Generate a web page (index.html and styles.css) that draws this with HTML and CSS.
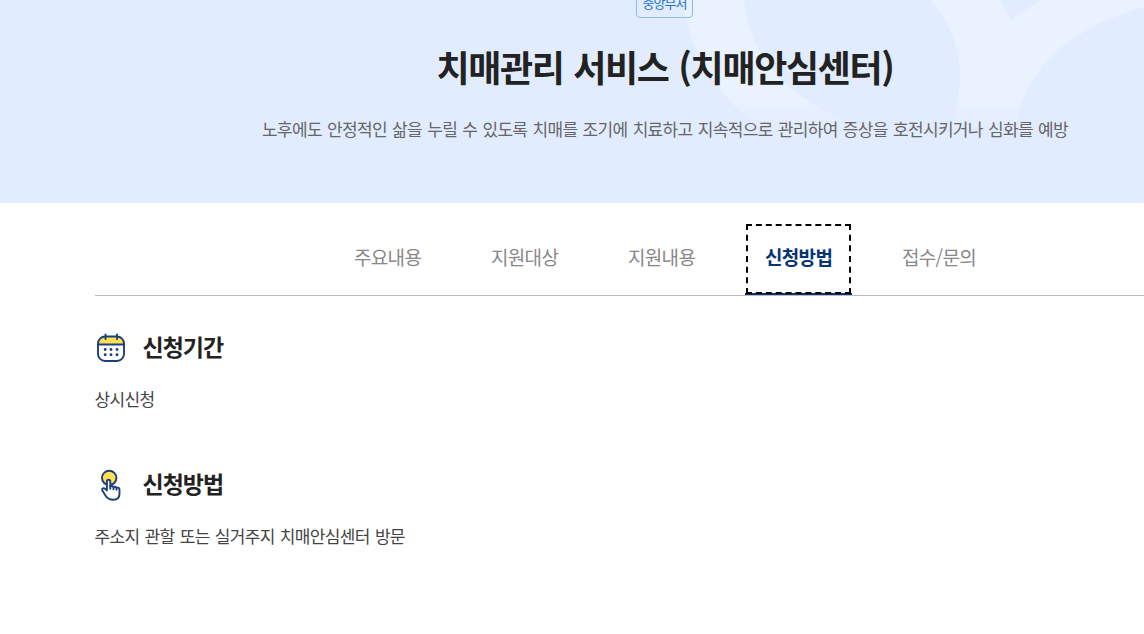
FILE: index.html
```html
<!DOCTYPE html>
<html lang="ko">
<head>
  <meta charset="UTF-8">
  <meta name="viewport" content="width=device-width, initial-scale=1.0">
  <title>치매관리 서비스 (치매안심센터)</title>
  <link rel="stylesheet" href="styles.css">
</head>
<body>
  <div class="page">

    <!-- 상단 서비스 소개 -->
    <header class="visual">
      <svg class="visual-bg" width="1330" height="203" viewBox="0 0 1330 203" aria-hidden="true">
        <defs>
          <linearGradient id="fade" gradientUnits="userSpaceOnUse" x1="0" y1="102" x2="0" y2="128">
            <stop offset="0" stop-color="#eaf1ff"/>
            <stop offset="1" stop-color="#e1edff"/>
          </linearGradient>
        </defs>
        <path fill="url(#fade)" d="M682 0Q694 78 760 128H862Q751 86 744 0Z"/>
        <path fill="url(#fade)" d="M930 0Q960 34 960 75Q960 104 951 128H1015Q1030 39 1144 7V0H1041Q1024 9 1011 21Q1006 9 999 0Z"/>
      </svg>
      <span class="badge">중앙부처</span>
      <h1 class="title">치매관리 서비스 (치매안심센터)</h1>
      <p class="summary">노후에도 안정적인 삶을 누릴 수 있도록 치매를 조기에 치료하고 지속적으로 관리하여 증상을 호전시키거나 심화를 예방</p>
    </header>

    <main class="container">
      <!-- 탭 메뉴 -->
      <nav class="tabs">
        <a class="tab" href="#">주요내용</a>
        <a class="tab" href="#">지원대상</a>
        <a class="tab" href="#">지원내용</a>
        <a class="tab active" href="#">신청방법</a>
        <a class="tab" href="#">접수/문의</a>
      </nav>

      <section class="info">
        <h2 class="info-title">
          <svg class="icon" width="32" height="32" viewBox="0 0 32 32" fill="none" stroke="#1b4079" stroke-width="1.900" stroke-linecap="round">
            <path d="M3 12.500V11Q3 4.500 9.500 4.500H22.500Q29 4.500 29 11V12.500Z" fill="#ffdf55" stroke="none"/>
            <rect x="3" y="4.500" width="26" height="24.500" rx="7"/>
            <path d="M3 12.500H29M10.500 2.500V7M22 2.500V7"/>
            <path d="M10.200 17.500h.01M16 17.500h.01M22 17.500h.01M10.200 22.800h.01M16 22.800h.01M22 22.800h.01" stroke-width="2.900"/>
          </svg>
          <span>신청기간</span>
        </h2>
        <p class="info-text">상시신청</p>
      </section>

      <section class="info">
        <h2 class="info-title">
          <svg class="icon" width="32" height="32" viewBox="0 0 32 32" fill="none" stroke="#1b4079" stroke-width="1.900" stroke-linecap="round" stroke-linejoin="round">
            <circle cx="14.200" cy="8.900" r="7.200" fill="#ffdf55"/>
            <path fill="#fff" d="M11.900 21.500V12.400a1.700 1.700 0 0 1 3.400 0V17.500q1.700-1.100 3.200.5 1.700-.8 3 .7 2.800-.6 3 1.800V24.500q0 6.200-6.200 6.200-5.200 0-7.500-3.700L7.200 21.200q-.4-2.200 1.700-2 1.500.4 3 2.300Z"/>
            <path d="M15.300 17.500v2.200M18.500 18v2.200M21.500 18.700v2"/>
          </svg>
          <span>신청방법</span>
        </h2>
        <p class="info-text">주소지 관할 또는 실거주지 치매안심센터 방문</p>
      </section>
    </main>

  </div>
</body>
</html>
```
FILE: styles.css
```css
* {
  margin: 0;
  padding: 0;
  box-sizing: border-box;
}

body {
  font-family: "Noto Sans CJK KR", "Noto Sans", sans-serif;
  background: #fff;
  color: #222;
  letter-spacing: -0.65px;
  word-spacing: 1px;
  overflow: hidden;
}

.page {
  width: 1330px;
}

/* Visual */
.visual {
  position: relative;
  height: 203px;
  background: #e1edff;
  display: flex;
  flex-direction: column;
  align-items: center;
}

.visual-bg {
  position: absolute;
  top: 0;
  left: 0;
}

.badge {
  position: relative;
  width: 57px;
  height: 28px;
  margin-top: -10px;
  margin-right: 1px;
  border: 1px solid #8ebbea;
  border-radius: 4px;
  color: #1c70cf;
  font-size: 13px;
  line-height: 24px;
  letter-spacing: -0.9px;
  text-align: center;
}

.title {
  position: relative;
  margin-top: 22px;
  font-size: 36px;
  line-height: 52px;
  letter-spacing: -1.35px;
}

.summary {
  position: relative;
  margin-top: 24px;
  color: #666;
  font-size: 17px;
  line-height: 26px;
}

/* Tabs */
.container {
  width: 1140px;
  margin: 0 auto;
}

.tabs {
  display: flex;
  justify-content: center;
  gap: 29.7px;
  height: 93px;
  padding-top: 20px;
  border-bottom: 1px solid #bbb;
}

.tab {
  height: 72px;
  padding: 0 20px;
  color: #888;
  font-size: 19px;
  line-height: 67px;
  text-decoration: none;
}

.tab.active {
  color: #063474;
  font-weight: bold;
  border-bottom: 2px solid #063474;
  outline: 2px dashed #000;
  outline-offset: -3px;
}

/* Info */
.info {
  padding-top: 34px;
  height: 137px;
}

.info-title {
  display: flex;
  align-items: center;
  gap: 15.5px;
  height: 36px;
  font-size: 23px;
  line-height: 32px;
  letter-spacing: -1px;
}

.info-title span {
  padding-bottom: 4px;
}

.info-text {
  margin-top: 20px;
  margin-left: -0.5px;
  color: #444;
  font-size: 17px;
  line-height: 26px;
}
```
